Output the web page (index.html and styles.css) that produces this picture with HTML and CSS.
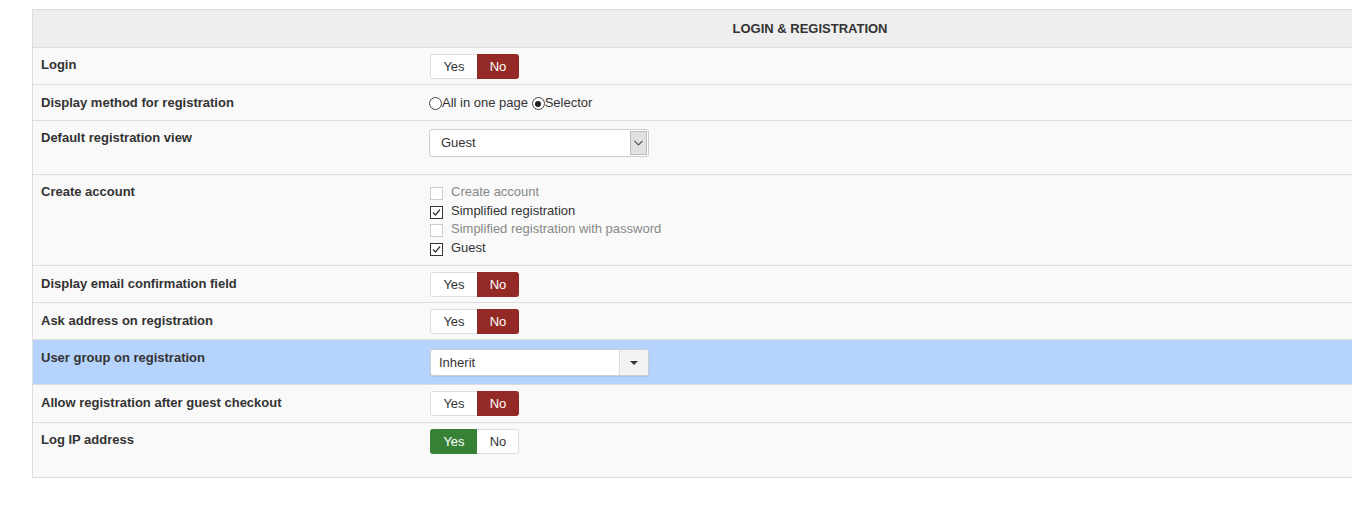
FILE: index.html
```html
<!DOCTYPE html>
<html>
<head>
<meta charset="utf-8">
<link rel="stylesheet" href="styles.css">
</head>
<body>
<div class="page">
  <div class="panel">
    <div class="head">LOGIN &amp; REGISTRATION</div>

    <div class="row r-login">
      <div class="label">Login</div>
      <div class="control c-toggle">
        <div class="toggle"><span class="opt">Yes</span><span class="opt on-no">No</span></div>
      </div>
    </div>

    <div class="row r-method">
      <div class="label">Display method for registration</div>
      <div class="control c-radio">
        <span class="radio"></span>All in one page <span class="radio checked"></span>Selector
      </div>
    </div>

    <div class="row r-view">
      <div class="label">Default registration view</div>
      <div class="control c-select">
        <div class="native-select"><span class="sel-text">Guest</span><span class="sel-btn"><svg width="9" height="6" viewBox="0 0 9 6"><path d="M0.5 0.8 L4.5 4.8 L8.5 0.8" fill="none" stroke="#555" stroke-width="1.2"/></svg></span></div>
      </div>
    </div>

    <div class="row r-account">
      <div class="label">Create account</div>
      <div class="control c-checks">
        <div class="check disabled"><span class="box"></span>Create account</div>
        <div class="check"><span class="box"><svg width="11" height="11" viewBox="0 0 11 11"><path d="M2 5.5 L4.5 8 L9 2.5" fill="none" stroke="#333" stroke-width="1.2"/></svg></span>Simplified registration</div>
        <div class="check disabled"><span class="box"></span>Simplified registration with password</div>
        <div class="check"><span class="box"><svg width="11" height="11" viewBox="0 0 11 11"><path d="M2 5.5 L4.5 8 L9 2.5" fill="none" stroke="#333" stroke-width="1.2"/></svg></span>Guest</div>
      </div>
    </div>

    <div class="row r-toggle">
      <div class="label">Display email confirmation field</div>
      <div class="control c-toggle">
        <div class="toggle"><span class="opt">Yes</span><span class="opt on-no">No</span></div>
      </div>
    </div>

    <div class="row r-toggle">
      <div class="label">Ask address on registration</div>
      <div class="control c-toggle">
        <div class="toggle"><span class="opt">Yes</span><span class="opt on-no">No</span></div>
      </div>
    </div>

    <div class="row r-group highlight">
      <div class="label">User group on registration</div>
      <div class="control c-chosen">
        <div class="chosen"><span class="sel-text">Inherit</span><span class="chosen-btn"><span class="caret"></span></span></div>
      </div>
    </div>

    <div class="row r-allow">
      <div class="label">Allow registration after guest checkout</div>
      <div class="control c-toggle">
        <div class="toggle"><span class="opt">Yes</span><span class="opt on-no">No</span></div>
      </div>
    </div>

    <div class="row r-logip">
      <div class="label">Log IP address</div>
      <div class="control c-toggle">
        <div class="toggle"><span class="opt on-yes">Yes</span><span class="opt">No</span></div>
      </div>
    </div>
  </div>
</div>
</body>
</html>
```

FILE: styles.css
```css
html, body {
  margin: 0;
  padding: 0;
  background: #fff;
  overflow: hidden;
}
body {
  font-family: "Liberation Sans", Arial, sans-serif;
  font-size: 13px;
  color: #333;
}
.page {
  padding: 9px 0 0 32px;
  width: 1320px;
  overflow: hidden;
}
.panel {
  width: 1554px;
  border: 1px solid #ddd;
  background: #f9f9f9;
}
.head {
  height: 37px;
  line-height: 38px;
  background: #eee;
  text-align: center;
  font-weight: bold;
  font-size: 13px;
  color: #333;
}
.row {
  display: flex;
  border-top: 1px solid #ddd;
  box-sizing: border-box;
}
.row.highlight {
  background: #b6d3fe;
}
.label {
  width: 388px;
  flex: none;
  box-sizing: border-box;
  padding: 8px;
  line-height: 18px;
  font-weight: bold;
}
.control {
  flex: 1;
  padding: 0 8px;
}
.r-login { height: 37px; }
.r-method { height: 36px; }
.r-method .label { padding-top: 9px; }
.r-view { height: 54px; }
.r-account { height: 91px; }
.r-toggle { height: 37px; }
.r-toggle .label,
.r-group .label,
.r-allow .label { padding-top: 9px; }
.r-group { height: 45px; }
.r-allow { height: 38px; }
.r-logip { height: 55px; }

.c-toggle { padding: 6px 8px 0 9px; }
.toggle {
  display: inline-flex;
  height: 25px;
  border-radius: 3px;
  overflow: hidden;
  box-shadow: inset 0 0 0 1px #ddd;
  background: #fff;
}
.opt {
  display: block;
  line-height: 25px;
  text-align: center;
  color: #333;
}
.opt:first-child { width: 46px; padding-left: 1px; }
.opt:last-child { width: 42px; }
.opt.on-no {
  background: #942a25;
  color: #fff;
}
.opt.on-yes {
  background: #378137;
  color: #fff;
}

.c-radio {
  padding-top: 9px;
  line-height: 18px;
}
.radio {
  display: inline-block;
  width: 11px;
  height: 11px;
  border: 1px solid #444;
  border-radius: 50%;
  background: #fff;
  vertical-align: -3px;
  position: relative;
  box-sizing: content-box;
}
.radio.checked::after {
  content: "";
  position: absolute;
  left: 2.5px;
  top: 2.5px;
  width: 6px;
  height: 6px;
  border-radius: 50%;
  background: #222;
}

.c-select { padding-top: 8px; }
.native-select {
  width: 220px;
  height: 28px;
  box-sizing: border-box;
  border: 1px solid #ccc;
  border-radius: 3px;
  background: #fff;
  display: flex;
  align-items: stretch;
}
.sel-text {
  flex: 1;
  line-height: 26px;
  padding-left: 11px;
}
.sel-btn {
  width: 17px;
  margin: 1px 1px 1px 0;
  background: #e1e1e1;
  border: 1px solid #bbb;
  box-sizing: border-box;
  display: flex;
  align-items: center;
  justify-content: center;
}

.c-checks {
  padding-top: 8px;
}
.check {
  display: flex;
  align-items: center;
  line-height: 18.5px;
  height: 18.5px;
  color: #333;
}
.check.disabled {
  color: #888;
}
.box {
  width: 13px;
  height: 13px;
  box-sizing: border-box;
  border: 1px solid #333;
  background: #fff;
  margin: 3px 8px 0 1px;
  display: flex;
  align-items: center;
  justify-content: center;
  flex: none;
}
.check.disabled .box {
  border-color: #ccc;
}

.c-chosen { padding-top: 9px; }
.chosen {
  width: 219px;
  height: 27px;
  box-sizing: border-box;
  border: 1px solid #ccc;
  border-radius: 3px;
  background: #fff;
  box-shadow: 0 1px 1px rgba(0,0,0,0.08);
  display: flex;
  margin-left: 1px;
}
.chosen .sel-text {
  padding-left: 8px;
  line-height: 25px;
}
.chosen-btn {
  width: 28px;
  background: #f2f2f2;
  border-left: 1px solid #ddd;
  display: flex;
  align-items: center;
  justify-content: center;
  border-radius: 0 3px 3px 0;
}
.caret {
  width: 0;
  height: 0;
  border-left: 4px solid transparent;
  border-right: 4px solid transparent;
  border-top: 4px solid #333;
  margin-top: 1px;
}
```
